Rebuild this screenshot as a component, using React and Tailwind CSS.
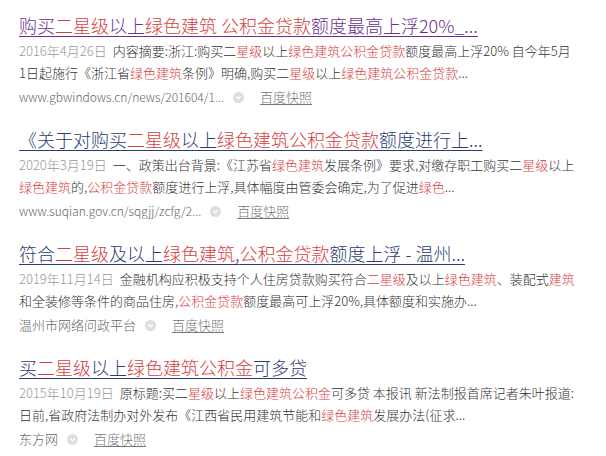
import React from 'react';

const R = ({ children }) => <span className="text-[#d6413f]">{children}</span>;

const RESULTS = [
    {
        visited: true,
        title: ['购买', <R key="a">二星级</R>, '以上', <R key="b">绿色建筑 公积金贷款</R>, '额度最高上浮20%_...'],
        date: '2016年4月26日',
        lines: [
            ['内容摘要:浙江:购买二', <R key="a">星级</R>, '以上', <R key="b">绿色建筑公积金贷款</R>, '额度最高上浮20% 自今年5月'],
            ['1日起施行《浙江省', <R key="a">绿色建筑</R>, '条例》明确,购买二', <R key="b">星级</R>, '以上', <R key="c">绿色建筑公积金贷款</R>, '...'],
        ],
        source: 'www.gbwindows.cn/news/201604/1...',
        latin: true,
    },
    {
        title: ['《关于对购买', <R key="a">二星级</R>, '以上', <R key="b">绿色建筑公积金贷款</R>, '额度进行上...'],
        date: '2020年3月19日',
        lines: [
            ['一、政策出台背景:《江苏省', <R key="a">绿色建筑</R>, '发展条例》要求,对缴存职工购买二', <R key="b">星级</R>, '以上'],
            [<R key="a">绿色建筑</R>, '的,', <R key="b">公积金贷款</R>, '额度进行上浮,具体幅度由管委会确定,为了促进', <R key="c">绿色</R>, '...'],
        ],
        source: 'www.suqian.gov.cn/sqgjj/zcfg/2...',
        latin: true,
    },
    {
        title: ['符合', <R key="a">二星级</R>, '及以上', <R key="b">绿色建筑</R>, ',', <R key="c">公积金贷款</R>, '额度上浮 - 温州...'],
        date: '2019年11月14日',
        lines: [
            ['金融机构应积极支持个人住房贷款购买符合', <R key="a">二星级</R>, '及以上', <R key="b">绿色建筑</R>, '、装配式', <R key="c">建筑</R>],
            ['和全装修等条件的商品住房,', <R key="a">公积金贷款</R>, '额度最高可上浮20%,具体额度和实施办...'],
        ],
        source: '温州市网络问政平台',
    },
    {
        title: ['买', <R key="a">二星级</R>, '以上', <R key="b">绿色建筑公积金</R>, '可多贷'],
        date: '2015年10月19日',
        lines: [
            ['原标题:买二', <R key="a">星级</R>, '以上', <R key="b">绿色建筑公积金</R>, '可多贷 本报讯 新法制报首席记者朱叶报道:'],
            ['日前,省政府法制办对外发布《江西省民用建筑节能和', <R key="a">绿色建筑</R>, '发展办法(征求...'],
        ],
        source: '东方网',
    },
];

function ToolIcon() {
    return (
        <svg width="11" height="11" viewBox="0 0 11 11" className="shrink-0">
            <circle cx="5.5" cy="5.5" r="5.5" fill="#dedede" />
            <path d="M3.3 4.4 L5.5 6.8 L7.7 4.4" stroke="#fff" strokeWidth="1.4" fill="none" />
        </svg>
    );
}

export default function App() {
    return (
        <div
            className="w-[606px] h-[456px] overflow-hidden bg-white pl-[19px] pt-[13px] font-light"
            style={{ fontFamily: '"Noto Sans CJK SC", "Noto Sans", sans-serif' }}
        >
            {RESULTS.map((r, i) => (
                <div key={i} className="mb-[19px]">
                    <div
                        className={
                            'text-[18px] leading-[24px] underline underline-offset-[3px] whitespace-nowrap ' +
                            (r.visited ? 'text-[#6c2f8e]' : 'text-[#2b3b73]')
                        }
                    >
                        {r.title}
                    </div>
                    <div className="mt-[3px] text-[13px] leading-[22px] text-[#333] whitespace-nowrap">
                        <div>
                            <span className="text-[#999] mr-[6px]">{r.date}</span>
                            {r.lines[0]}
                        </div>
                        <div>{r.lines[1]}</div>
                    </div>
                    <div className="mt-[2px] flex items-center h-[22px] text-[13px] text-[#666] whitespace-nowrap">
                        <span className={r.latin ? 'text-[12px]' : ''}>{r.source}</span>
                        <span className="ml-[9px] mr-[16px] flex">
                            <ToolIcon />
                        </span>
                        <span className="underline underline-offset-2 text-[#777]">百度快照</span>
                    </div>
                </div>
            ))}
        </div>
    );
}
